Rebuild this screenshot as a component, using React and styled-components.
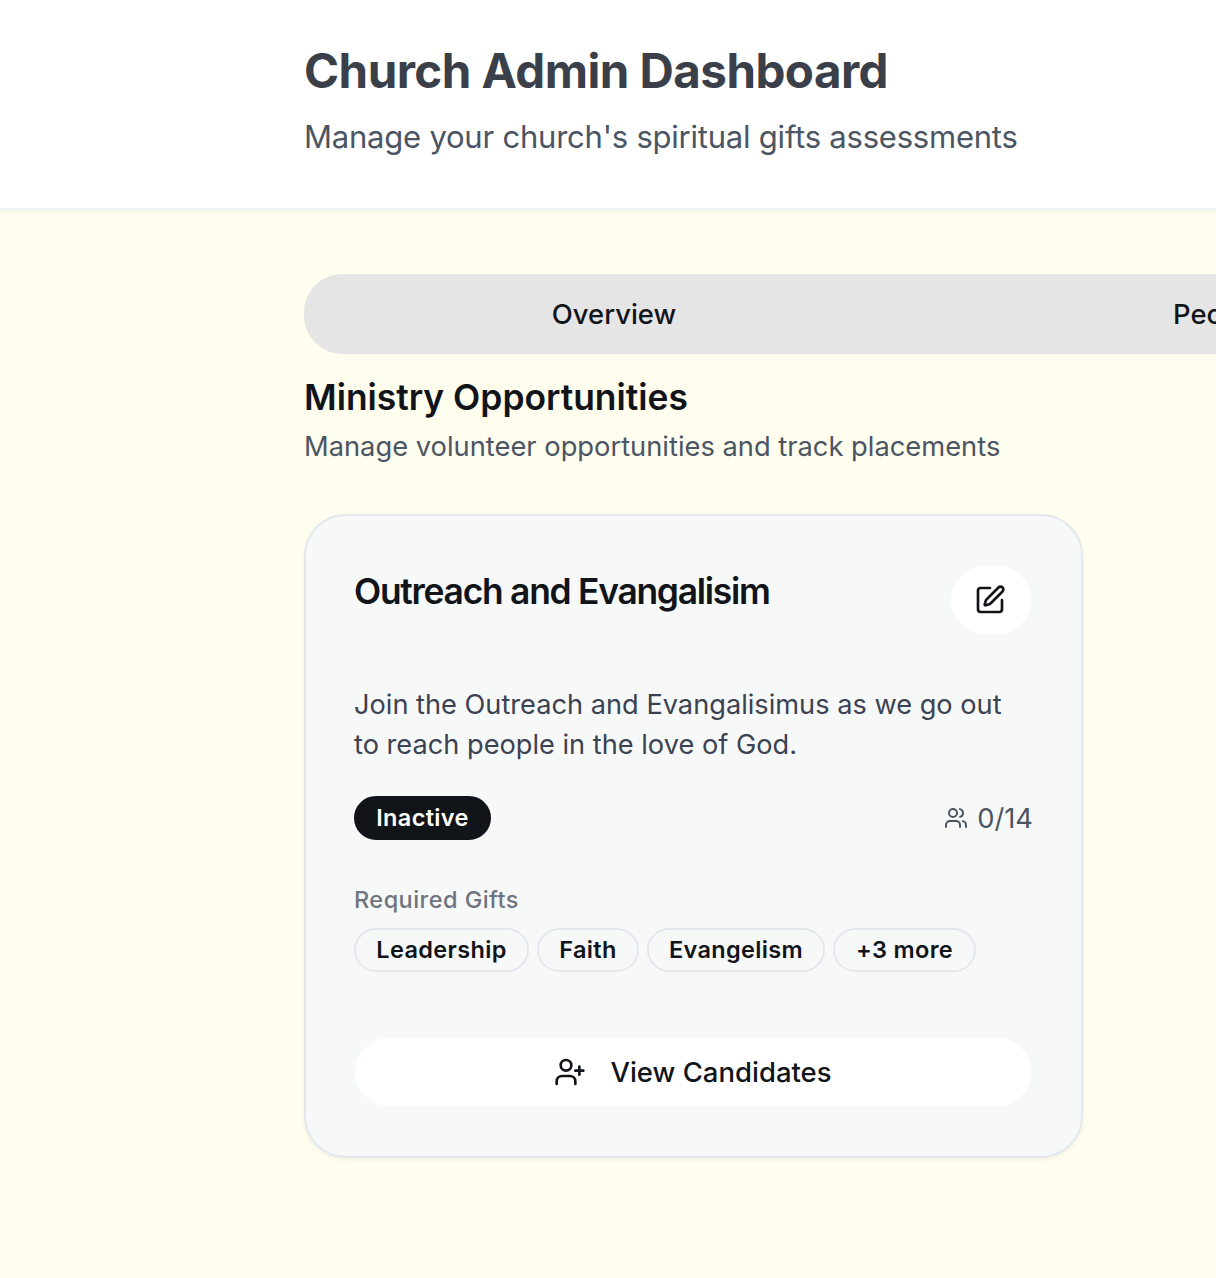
import React from 'react';
import styled, { createGlobalStyle } from 'styled-components';
import { SquarePen, Users, UserPlus } from 'lucide-react';

const Global = createGlobalStyle`
  * { box-sizing: border-box; }
  body { margin: 0; background: #fffdee; font-family: Inter, "Liberation Sans", sans-serif; color: #111418; overflow: hidden; }
  h1, h2, h3, p { margin: 0; }
  button { font-family: inherit; color: inherit; border: 0; padding: 0; }
`;
const Page = styled.div`
  width: 1216px; height: 1278px; overflow: hidden; background: #fffdee;
`;
const Header = styled.header`
  height: 210px; margin: 0 -8px; padding: 39px 0 0 312px; background: #fff; border-bottom: 2px solid #eef2f4;
  box-shadow: 0 2px 4px rgba(0, 0, 0, 0.05);
`;
const Title = styled.h1`
  font-size: 47.5px; line-height: 64px; font-weight: 700; color: #3b3f4a; letter-spacing: -0.54px; white-space: nowrap;
`;
const Subtitle = styled.p`
  margin-top: 10px; font-size: 31px; line-height: 48px; color: #4b5563; letter-spacing: -0.22px; white-space: nowrap;
`;
const Main = styled.main`
  padding: 64px 0 0 304px;
`;
const Tabs = styled.nav`
  display: grid; grid-template-columns: 604px 604px; width: 1224px; height: 80px; padding: 0 8px; border-radius: 38px; background: #e5e5e5;
`;
const Tab = styled.button`
  background: none; font-size: 27.4px; font-weight: 500; line-height: 40px;
`;
const SectionTitle = styled.h2`
  margin-top: 16px; font-size: 35.4px; line-height: 55px; font-weight: 600; white-space: nowrap;
`;
const SectionText = styled.p`
  margin-top: 2px; font-size: 27.3px; line-height: 40px; color: #4b5563; white-space: nowrap;
`;
const Card = styled.article`
  width: 779px; height: 644px; margin-top: 47px; padding: 50px 50px 0 48px; border: 2px solid #e2e8ee; border-radius: 42px;
  background: #f7f9f8; box-shadow: 0 2px 4px rgba(0, 0, 0, 0.05);
`;
const CardHead = styled.div`
  display: flex; justify-content: space-between; height: 118px;
`;
const CardTitle = styled.h3`
  font-size: 35.4px; line-height: 51px; font-weight: 600; letter-spacing: -1.26px; white-space: nowrap;
`;
const EditButton = styled.button`
  display: grid; place-items: center; width: 80.5px; height: 68px; padding-right: 1.5px; border-radius: 34px; background: #fff;
`;
const Description = styled.p`
  padding-top: 1px; font-size: 27.2px; line-height: 40px; color: #3b4252; white-space: nowrap;
`;
const StatusRow = styled.div`
  display: flex; align-items: center; justify-content: space-between; margin-top: 31px; height: 44px;
`;
const Badge = styled.span`
  display: inline-flex; align-items: center; justify-content: center; width: ${p => p.$w}px; height: 44px;
  border: 2px solid ${p => (p.$dark ? '#111418' : '#e2e8ee')}; border-radius: 22px;
  background: ${p => (p.$dark ? '#111418' : 'transparent')}; color: ${p => (p.$dark ? '#fff' : '#111418')};
  font-size: 23.5px; line-height: 32px; font-weight: 600; letter-spacing: 0.35px; white-space: nowrap;
`;
const Count = styled.div`
  display: flex; align-items: center; gap: 9px; margin-right: -2px; font-size: 27.3px; line-height: 40px; color: #4b5563;

  span { padding-top: 1px; }
`;
const Label = styled.p`
  margin-top: 44px; font-size: 23.5px; line-height: 32px; font-weight: 500; letter-spacing: 0.46px; color: #6f7482;
`;
const Gifts = styled.div`
  display: flex; gap: 8px; margin-top: 12px;
`;
const Candidates = styled.button`
  display: flex; align-items: center; justify-content: center; gap: 24px; width: 676px; height: 68px; margin: 66px 0 0 1px;
  border-radius: 34px; background: #fff; font-size: 27.5px; font-weight: 500; line-height: 40px;
`;

const gifts = [['Leadership', 175], ['Faith', 102], ['Evangelism', 178], ['+3 more', 143]];

export default function App() {
  return (
    <Page>
      <Global />
      <Header>
        <Title>Church Admin Dashboard</Title>
        <Subtitle>Manage your church's spiritual gifts assessments</Subtitle>
      </Header>
      <Main>
        <Tabs><Tab>Overview</Tab><Tab>People</Tab></Tabs>
        <SectionTitle>Ministry Opportunities</SectionTitle>
        <SectionText>Manage volunteer opportunities and track placements</SectionText>
        <Card>
          <CardHead>
            <CardTitle>Outreach and Evangalisim</CardTitle>
            <EditButton aria-label="Edit"><SquarePen size={32} /></EditButton>
          </CardHead>
          <Description>Join the Outreach and Evangalisimus as we go out<br />to reach people in the love of God.</Description>
          <StatusRow>
            <Badge $dark $w={137}>Inactive</Badge>
            <Count><Users size={24} /><span>0/14</span></Count>
          </StatusRow>
          <Label>Required Gifts</Label>
          <Gifts>{gifts.map(([name, w]) => <Badge key={name} $w={w}>{name}</Badge>)}</Gifts>
          <Candidates><UserPlus size={32} /><span>View Candidates</span></Candidates>
        </Card>
      </Main>
    </Page>
  );
}
